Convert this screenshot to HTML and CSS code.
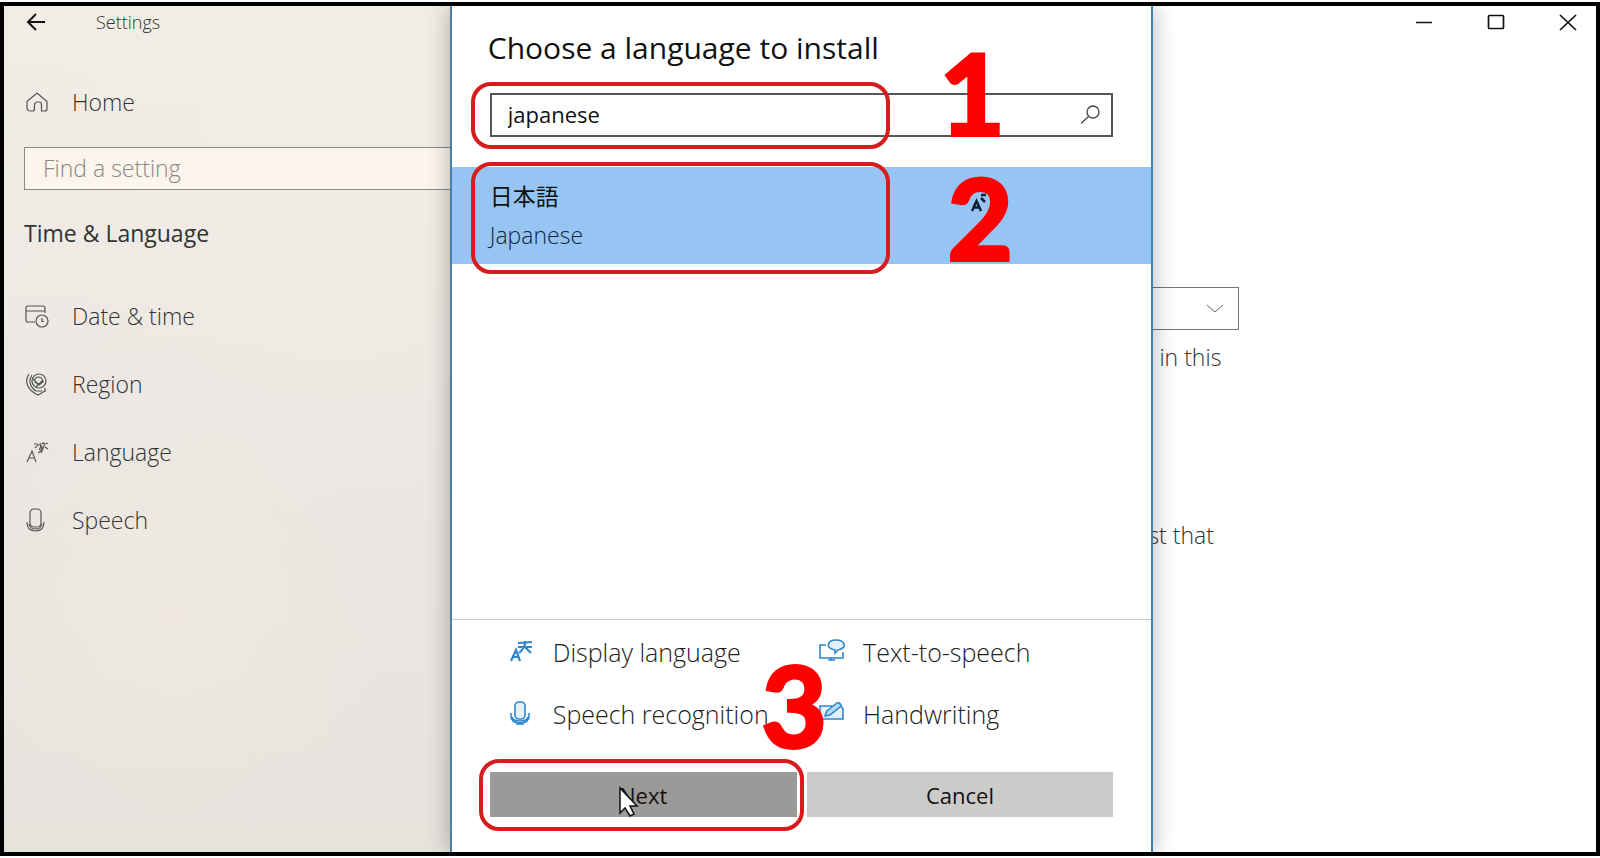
FILE: index.html
```html
<!DOCTYPE html>
<html lang="en">
<head>
<meta charset="utf-8">
<title>Settings</title>
<link rel="stylesheet" href="styles.css">
</head>
<body>
<div class="window">
  <aside class="sidebar">
    <header class="titlebar">
      <button class="icon-button" aria-label="Back">
        <svg width="20" height="18" viewBox="0 0 20 18" fill="none" stroke="#111" stroke-width="2"><path d="M19 9H2M10 1L2 9l8 8"/></svg>
      </button>
      <span class="app-name">Settings</span>
    </header>
    <a class="nav-link home" href="#">
      <svg class="nav-icon" viewBox="0 0 24 24"><path d="M2 11.500L12 3l10 8.500v7.500q0 2-2 2h-3.500v-6q0-3-2-3h-2v0q-3 0-3 3v4q0 2-2 2h-2q-3.500 0-3.500-4z"/></svg>
      Home
    </a>
    <input class="find" type="text" placeholder="Find a setting" aria-label="Find a setting">
    <h2 class="section">Time &amp; Language</h2>
    <nav class="nav">
      <a class="nav-link" href="#">
        <svg class="nav-icon" viewBox="0 0 24 24"><path d="M10 18H3q-2 0-2-2V4q0-2 2-2h15q2 0 2 2v5M1 7h19"/><circle cx="17" cy="17" r="6"/><path d="M17 14v3.500h2"/></svg>
        Date &amp; time
      </a>
      <a class="nav-link" href="#">
        <svg class="nav-icon" viewBox="0 0 24 24"><path d="M4 2C-1 9 2 18 13 23l7-4M7 3C3 9 5 15 11 19h6"/><circle cx="14" cy="9" r="7"/><path d="M14 5q-5 0-4 5l4 3 4-3q0-4-4-5zM7 6l7 7M11 15l7-7M20 16v4"/></svg>
        Region
      </a>
      <a class="nav-link" href="#">
        <svg class="nav-icon" viewBox="0 0 24 24"><path d="M2 22L7 11l4 11M4 18h6M9 4h4M15 3q2 3-1 7M10 8q5-6 7-1-1 5-4 6M17 4q3-3 2 2l-3 7M20 4l3-1M20 7l3 2"/></svg>
        Language
      </a>
      <a class="nav-link" href="#">
        <svg class="nav-icon" viewBox="0 0 24 24"><rect x="5" y="1" width="11" height="18" rx="4"/><path d="M2 14q0 9 8.500 9t8.500-9M4 16q1 5 6.500 5t6.500-5"/></svg>
        Speech
      </a>
    </nav>
  </aside>

  <section class="dialog" role="dialog" aria-labelledby="dialog-title">
    <h1 class="dialog-title" id="dialog-title">Choose a language to install</h1>
    <div class="search">
      <input class="search-input" type="text" value="japanese" aria-label="Search for a language">
      <svg class="search-icon" width="20" height="20" viewBox="0 0 20 20" fill="none" stroke="#444" stroke-width="1.300"><circle cx="13" cy="7" r="6"/><path d="M8.500 11.500L1 18.500"/></svg>
      <span class="ring ring-search"></span>
      <span class="step step-one">1</span>
    </div>
    <button class="language">
      <span class="language-native" lang="ja">日本語</span>
      <span class="language-name">Japanese</span>
      <svg class="language-icon" width="24" height="24" viewBox="0 0 24 24" fill="none" stroke="#0b1f33" stroke-width="2.500"><path d="M2 22L6.500 12l4.500 10M4 18.500h5M11 6h5M11 9l4 4"/></svg>
      <span class="ring ring-language"></span>
      <span class="step step-two">2</span>
    </button>
    <footer class="dialog-footer">
      <ul class="features">
        <li class="feature">
          <svg class="feature-icon" viewBox="0 0 26 26"><path stroke-width="2.200" d="M2 22L7 11l4 11M4 18h6M9 4l14-1M9 8h14M16 2q1 6-6 12M16 8l6 6"/></svg>
          Display language
        </li>
        <li class="feature">
          <svg class="feature-icon" viewBox="0 0 26 26"><path d="M7 6H1v13h23v-6M9 21h7M12 19v2"/><path fill="#e3f1fc" d="M16 11C6 9 8 1 17 1s12 8 2 10l-3 3z"/></svg>
          Text-to-speech
        </li>
        <li class="feature">
          <svg class="feature-icon" viewBox="0 0 26 26"><rect fill="#e3f1fc" x="6" y="1" width="10" height="17" rx="4"/><path d="M2 12v3q0 7 9 7t9-7v-3M3 16q1 4 8 4t8-4M7 23h8"/></svg>
          Speech recognition
        </li>
        <li class="feature">
          <svg class="feature-icon" viewBox="0 0 26 26"><path fill="#e3f1fc" d="M13 5H1v13h23V8l-4-6"/><path fill="#b9dcf6" d="M6 15l2-5L18 2q3-1 4 3L11 14z"/></svg>
          Handwriting
        </li>
      </ul>
      <span class="step step-three">3</span>
      <div class="actions">
        <div class="action">
          <button class="button button-primary">Next</button>
          <span class="ring ring-next"></span>
          <svg class="cursor" width="22" height="32" viewBox="0 0 22 32" fill="#fff" stroke="#111" stroke-width="1.500"><path d="M2 2v25l5-5 5 8 4-2-4-8h7z"/></svg>
        </div>
        <div class="action">
          <button class="button">Cancel</button>
        </div>
      </div>
    </footer>
  </section>

  <main class="content">
    <div class="caption">
      <button class="icon-button" aria-label="Minimize"><svg width="18" height="18" viewBox="0 0 18 18" fill="none" stroke="#111" stroke-width="1.500"><path d="M1 9.500h16"/></svg></button>
      <button class="icon-button" aria-label="Maximize"><svg width="18" height="18" viewBox="0 0 18 18" fill="none" stroke="#111" stroke-width="1.700"><rect x="1.500" y="2.500" width="15" height="13" rx="1"/></svg></button>
      <button class="icon-button" aria-label="Close"><svg width="18" height="18" viewBox="0 0 18 18" fill="none" stroke="#111" stroke-width="1.700"><path d="M1 2l16 15M17 2L1 17"/></svg></button>
    </div>
    <button class="dropdown" aria-label="Display language">
      <svg width="18" height="10" viewBox="0 0 18 10" fill="none" stroke="#666"><path d="M1 1l8 7 8-7"/></svg>
    </button>
    <p class="note">in this</p>
    <p class="note note-second">st that</p>
  </main>
</div>
</body>
</html>
```
FILE: styles.css
```css
* {
  box-sizing: border-box;
}

body {
  margin: 0;
  padding: 2px 0;
  height: 100vh;
  background: #fff;
  color: #333;
  font-family: "Open Sans", "Noto Sans", "Noto Sans CJK JP", sans-serif;
  font-size: 23px;
  font-weight: 300;
}

button,
input {
  font: inherit;
  color: inherit;
  border-radius: 0;
}

.window {
  display: grid;
  grid-template-columns: 28% 44.2% 1fr;
  height: 100%;
  border: 4px solid #000;
  background: #fff;
  overflow: hidden;
}

.icon-button {
  display: grid;
  place-items: center;
  padding: 0;
  border: 0;
  background: none;
}

/* Sidebar */
.sidebar {
  padding-left: 20px;
  background:
    radial-gradient(circle at 38% 72%, rgba(241, 234, 223, 0.7), transparent 32%),
    radial-gradient(circle at 75% 12%, rgba(242, 237, 228, 0.8), transparent 50%),
    linear-gradient(#f1ede6, #ebe7e2 50%, #e6e3dd);
}

.titlebar {
  display: flex;
  align-items: center;
  gap: 50px;
  height: 32px;
  padding-left: 2px;
}

.app-name {
  font-size: 18px;
}

.nav-link {
  display: flex;
  align-items: center;
  gap: 23px;
  height: 68px;
  padding-left: 1px;
  color: inherit;
  text-decoration: none;
}

.nav-icon {
  width: 24px;
  height: 24px;
  fill: none;
  stroke: #555;
  stroke-width: 1.2;
}

.home {
  height: 64px;
  margin-top: 32px;
}

.find {
  display: block;
  width: 100%;
  height: 43px;
  margin-top: 13px;
  padding: 0 18px 1px;
  border: 1px solid #8b8984;
  border-right: 0;
  background: #fbf5ee;
}

.find::placeholder {
  color: #8b8782;
  opacity: 1;
}

.section {
  margin: 27px 0 33px;
  font-size: 23px;
  line-height: 32px;
  font-weight: 400;
}

/* Dialog */
.dialog {
  z-index: 1;
  display: flex;
  flex-direction: column;
  border: solid #3f83ae;
  border-width: 0 2px;
  background: #fff;
  box-shadow: 0 0 22px rgba(0, 0, 0, 0.3);
}

.dialog-title {
  margin: 22px 36px 25px;
  color: #111;
  font-size: 30px;
  line-height: 40px;
  font-weight: 400;
}

.search {
  position: relative;
  margin: 0 38px;
}

.search-input {
  display: block;
  width: 100%;
  height: 44px;
  padding: 0 48px 2px 16px;
  border: 2px solid #555;
  background: #fff;
  color: #111;
  font-size: 22px;
  font-weight: 400;
}

.search-icon {
  position: absolute;
  top: 12px;
  right: 13px;
}

.language {
  position: relative;
  display: flex;
  flex-direction: column;
  align-items: flex-start;
  height: 97px;
  margin-top: 30px;
  padding: 10px 38px;
  border: 0;
  background: #96c5f3;
  color: #12263a;
  text-align: left;
}

.language-native {
  color: #111;
  font-family: "Noto Sans CJK JP", sans-serif;
  line-height: 36px;
  font-weight: 400;
}

.language-name {
  line-height: 44px;
}

.language-icon {
  position: absolute;
  top: 22px;
  left: 518px;
}

.dialog-footer {
  position: relative;
  margin-top: auto;
  padding: 1px 38px 35px;
  border-top: 1px solid #c6c6c6;
}

.features {
  display: grid;
  grid-template-columns: 1fr 1fr;
  column-gap: 16px;
  margin: 0 0 27px;
  padding: 0 0 0 19px;
  list-style: none;
  color: #222;
  font-size: 25px;
}

.feature {
  display: flex;
  align-items: center;
  gap: 18px;
  height: 62px;
  white-space: nowrap;
}

.feature-icon {
  width: 26px;
  height: 26px;
  fill: none;
  stroke: #2f86cc;
  stroke-width: 1.6;
}

.actions {
  display: grid;
  grid-template-columns: 1fr 1fr;
  gap: 10px;
}

.action {
  position: relative;
}

.button {
  display: block;
  width: 100%;
  height: 45px;
  border: 0;
  background: #cbcbca;
  color: #111;
  font-size: 22px;
  font-weight: 400;
}

.button-primary {
  background: #9b9a99;
}

/* Tutorial marks over the dialog */
.ring {
  position: absolute;
  border: 4px solid #d81c1e;
  border-radius: 20px;
  pointer-events: none;
}

.ring-search {
  inset: -11px 223px -12px -19px;
}

.ring-language {
  inset: -5px 261px -10px 19px;
}

.ring-next {
  inset: -13px -7px -14px -11px;
}

.step {
  position: absolute;
  color: #fe0000;
  font-family: Lato, sans-serif;
  font-size: 112px;
  line-height: 90px;
  font-weight: 700;
  -webkit-text-stroke: 4px #fe0000;
  pointer-events: none;
}

.step-one {
  top: -46px;
  left: 450px;
}

.step-two {
  top: 5px;
  left: 496px;
}

.step-three {
  top: 39px;
  left: 310px;
}

.cursor {
  position: absolute;
  top: 14px;
  left: 128px;
}

/* Page behind the dialog */
.content {
  display: flex;
  flex-direction: column;
  align-items: flex-start;
}

.caption {
  display: flex;
  align-self: flex-end;
  gap: 54px;
  height: 32px;
  padding-right: 19px;
}

.dropdown {
  display: flex;
  align-items: center;
  justify-content: flex-end;
  width: 86px;
  height: 43px;
  margin-top: 249px;
  padding: 0 14px;
  border: 1px solid #777;
  border-left: 0;
  background: none;
}

.note {
  margin: 11px 0 0 6px;
  font-size: 23px;
  line-height: 32px;
}

.note-second {
  margin: 146px 0 0 -5px;
}
```
